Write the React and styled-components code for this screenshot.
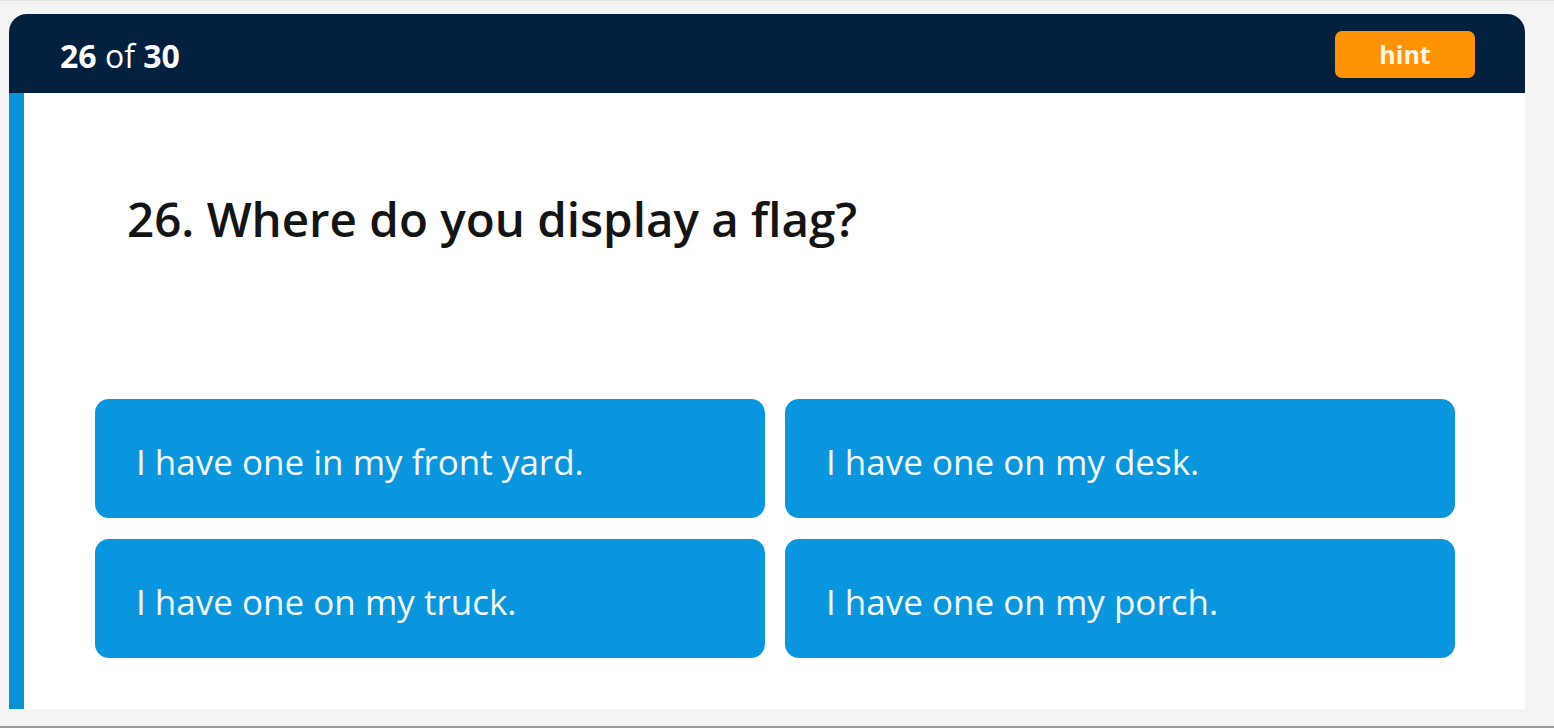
import React from "react";
import styled, { createGlobalStyle } from "styled-components";

const Global = createGlobalStyle`
  html, body { margin: 0; padding: 0; }
  body {
    background: #f5f5f5;
    font-family: "Open Sans", "Noto Sans", Lato, sans-serif;
    width: 1554px;
    height: 728px;
    overflow: hidden;
  }
`;

const Page = styled.div`
  box-sizing: border-box;
  width: 1554px;
  height: 728px;
  padding: 13px 29px 0 9px;
  border-top: 1px solid #e4e4e4;
  border-bottom: 2px solid #9a9a9a;
  background: #f4f4f4;
`;

const Card = styled.div`
  display: flex;
  flex-direction: column;
  width: 1516px;
`;

const Header = styled.header`
  box-sizing: border-box;
  height: 79px;
  background: #03213f;
  border-radius: 18px 18px 0 0;
  display: flex;
  align-items: center;
  justify-content: space-between;
  padding: 0 50px 0 51px;
`;

const Counter = styled.div`
  color: #ffffff;
  font-size: 32px;
  line-height: 38px;
  margin-top: 4px;
  b { font-weight: 700; }
  span { font-weight: 400; }
`;

const HintButton = styled.button`
  width: 140px;
  height: 47px;
  margin-top: 2px;
  border: none;
  border-radius: 7px;
  background: #ff9304;
  color: #fff6e4;
  font-family: inherit;
  font-size: 25px;
  font-weight: 700;
  line-height: 1;
  cursor: pointer;
`;

const Body = styled.main`
  box-sizing: border-box;
  height: 616px;
  background: #ffffff;
  border-left: 15px solid #0a91d8;
  padding: 101px 70px 0 71px;
  display: flex;
  flex-direction: column;
`;

const Question = styled.h1`
  margin: 0 0 0 32px;
  font-size: 47.5px;
  line-height: 50px;
  font-weight: 600;
  color: #141414;
`;

const Answers = styled.div`
  margin-top: 155px;
  display: grid;
  grid-template-columns: 670px 670px;
  grid-auto-rows: 119px;
  column-gap: 20px;
  row-gap: 21px;
`;

const Answer = styled.button`
  box-sizing: border-box;
  border: none;
  border-radius: 14px;
  background: #0a96de;
  color: #f4fbff;
  font-family: inherit;
  font-size: 35px;
  font-weight: 400;
  text-align: left;
  padding: 6px 0 0 41px;
  cursor: pointer;
`;

const answers = [
  "I have one in my front yard.",
  "I have one on my desk.",
  "I have one on my truck.",
  "I have one on my porch.",
];

export default function App() {
  return (
    <>
      <Global />
      <Page>
        <Card>
          <Header>
            <Counter>
              <b>26</b> <span>of</span> <b>30</b>
            </Counter>
            <HintButton>hint</HintButton>
          </Header>
          <Body>
            <Question>26. Where do you display a flag?</Question>
            <Answers>
              {answers.map((a) => (
                <Answer key={a}>{a}</Answer>
              ))}
            </Answers>
          </Body>
        </Card>
      </Page>
    </>
  );
}
